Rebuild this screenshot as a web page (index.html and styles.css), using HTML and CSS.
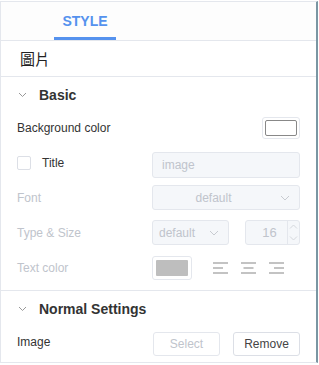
FILE: index.html
```html
<!DOCTYPE html>
<html>
<head>
<meta charset="utf-8">
<link rel="stylesheet" href="styles.css">
</head>
<body>
<div class="panel">
  <div class="tabs">
    <div class="tab active">STYLE</div>
  </div>
  <div class="title-row">圖片</div>
  <div class="section">
    <div class="section-head"><span class="chev"><svg width="9" height="6" viewBox="0 0 9 6"><path d="M1 1l3.5 3.5L8 1" fill="none" stroke="#999" stroke-width="1"/></svg></span>Basic</div>
    <div class="row">
      <span class="label">Background color</span>
      <span class="swatch-wrap"><span class="swatch white"></span></span>
    </div>
    <div class="row">
      <span class="label check-label"><span class="checkbox"></span>Title</span>
      <span class="input disabled">image</span>
    </div>
    <div class="row">
      <span class="label dim">Font</span>
      <span class="select disabled wide"><span class="val">default</span><svg class="arrow" width="10" height="6" viewBox="0 0 10 6"><path d="M1 1l4 4 4-4" fill="none" stroke="#c8cbd1" stroke-width="1"/></svg></span>
    </div>
    <div class="row">
      <span class="label dim">Type &amp; Size</span>
      <span class="pair">
        <span class="select disabled small"><span class="val">default</span><svg class="arrow" width="10" height="6" viewBox="0 0 10 6"><path d="M1 1l4 4 4-4" fill="none" stroke="#c8cbd1" stroke-width="1"/></svg></span>
        <span class="number disabled"><span class="num">16</span><span class="spin"><svg width="9" height="5" viewBox="0 0 9 5"><path d="M1 4.5L4.5 1L8 4.5" fill="none" stroke="#d4d7dc" stroke-width="1"/></svg><svg width="9" height="5" viewBox="0 0 9 5"><path d="M1 0.5L4.5 4L8 0.5" fill="none" stroke="#d4d7dc" stroke-width="1"/></svg></span></span>
      </span>
    </div>
    <div class="row">
      <span class="label dim">Text color</span>
      <span class="pair start">
        <span class="swatch-wrap grey-wrap"><span class="swatch grey"></span></span>
        <span class="aligns">
          <svg width="15" height="12" viewBox="0 0 15 12"><path d="M0 1h15M0 6h10M0 11h15" stroke="#888" stroke-width="1.2"/></svg>
          <svg width="15" height="12" viewBox="0 0 15 12"><path d="M0 1h15M2.5 6h10M0 11h15" stroke="#888" stroke-width="1.2"/></svg>
          <svg width="15" height="12" viewBox="0 0 15 12"><path d="M0 1h15M5 6h10M0 11h15" stroke="#888" stroke-width="1.2"/></svg>
        </span>
      </span>
    </div>
  </div>
  <div class="section last">
    <div class="section-head"><span class="chev"><svg width="9" height="6" viewBox="0 0 9 6"><path d="M1 1l3.5 3.5L8 1" fill="none" stroke="#999" stroke-width="1"/></svg></span>Normal Settings</div>
    <div class="row">
      <span class="label">Image</span>
      <span class="buttons"><span class="btn disabled">Select</span><span class="btn">Remove</span></span>
    </div>
  </div>
</div>
</body>
</html>
```
FILE: styles.css
```css
html, body { margin: 0; padding: 0; background: #fff; }
body { font-family: "Liberation Sans", Arial, "Noto Sans CJK TC", sans-serif; font-size: 12px; color: #333; }
.panel {
  width: 318px; height: 362px; box-sizing: border-box;
  border-left: 1px solid #e4e7ed; border-right: 2px solid #7a96a3;
  border-top: 1px solid #e4e7ed; border-bottom: 1px solid #e4e7ed;
  margin-top: 1px;
}
.tabs { height: 38px; background: #fdfdfd; border-bottom: 1px solid #e4e7ed; display: flex; padding-left: 53px; }
.tab { width: 62px; display: flex; align-items: center; justify-content: center; font-weight: bold; font-size: 14px; color: #5592ee; box-sizing: border-box; border-bottom: 3px solid #5592ee; padding-top: 2px; }
.title-row { height: 35px; border-bottom: 1px solid #e4e7ed; padding-left: 19px; display: flex; align-items: center; font-size: 15px; color: #222; font-family: "Noto Sans CJK TC", sans-serif; }
.section { padding: 2px 16px 5px 16px; border-bottom: 1px solid #e4e7ed; }
.section.last { border-bottom: none; }
.section-head { height: 31px; display: flex; align-items: center; font-weight: bold; font-size: 14px; color: #333; }
.chev { width: 21px; padding-left: 1px; display: flex; align-items: center; }
.row { height: 35px; display: flex; align-items: center; justify-content: space-between; }
.label { color: #333; }
.label.dim { color: #c0c4cc; }
.check-label { display: flex; align-items: center; }
.checkbox { width: 12px; height: 12px; border: 1px solid #dcdfe6; border-radius: 2px; margin-right: 11px; }
.input { width: 148px; height: 26px; box-sizing: border-box; border: 1px solid #e4e7ed; border-radius: 3px; background: #f5f7fa; color: #c0c4cc; display: flex; align-items: center; padding-left: 9px; margin-top: 4px; }
.select { height: 25px; box-sizing: border-box; border: 1px solid #e4e7ed; border-radius: 3px; background: #f5f7fa; color: #c0c4cc; display: flex; align-items: center; }
.select.wide { width: 148px; }
.select .val { flex: 1; text-align: center; padding-right: 6px; }
.select .arrow { margin-right: 9px; }
.select.small { width: 77px; }
.select.small .val { text-align: left; padding-left: 6px; }
.pair { width: 148px; display: flex; align-items: center; justify-content: space-between; }
.pair.start { justify-content: flex-start; }
.number { width: 55px; height: 25px; box-sizing: border-box; border: 1px solid #e4e7ed; border-radius: 3px; background: #f5f7fa; color: #c0c4cc; display: flex; align-items: stretch; }
.num { flex: 1; display: flex; align-items: center; justify-content: center; font-size: 13px; padding-left: 6px; }
.spin { width: 11px; border-left: 1px solid #e4e7ed; display: flex; flex-direction: column; align-items: center; justify-content: space-around; }
.spin svg { display: block; }
.swatch-wrap { border: 1px solid #e4e7ed; border-radius: 3px; padding: 2px; display: flex; }
.swatch { display: block; }
.swatch.white { width: 30px; height: 14px; border: 1px solid #888; border-radius: 2px; background: #fff; }
.grey-wrap { padding: 3px; }
.swatch.grey { width: 32px; height: 16px; background: #bebebe; border-radius: 1px; }
.aligns { display: flex; gap: 13px; margin-left: 21px; }
.buttons { display: flex; gap: 13px; margin-top: 4px; }
.btn { width: 67px; height: 24px; box-sizing: border-box; border: 1px solid #dcdfe6; border-radius: 3px; display: flex; align-items: center; justify-content: center; color: #444; font-size: 12px; }
.btn.disabled { color: #c0c4cc; border-color: #e4e7ed; }
```
